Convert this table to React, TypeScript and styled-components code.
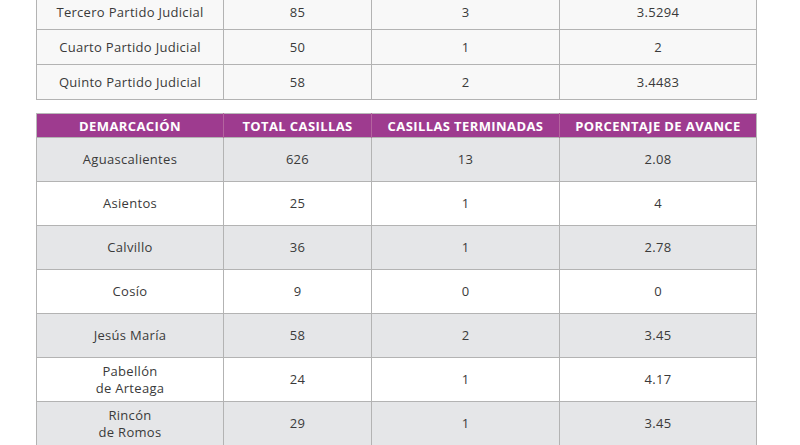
import styled, { createGlobalStyle } from "styled-components";

const GlobalStyle = createGlobalStyle`
  body {
    margin: 0;
    background: #ffffff;
    font-family: "Open Sans", "Liberation Sans", sans-serif;
    color: #3a3a3a;
    overflow: hidden;
  }
`

type Row = [string, string, string, string];

const partidos: Row[] = [
  ["Tercero Partido Judicial", "85", "3", "3.5294"],
  ["Cuarto Partido Judicial", "50", "1", "2"],
  ["Quinto Partido Judicial", "58", "2", "3.4483"],
];

const municipios: Row[] = [
  ["Aguascalientes", "626", "13", "2.08"],
  ["Asientos", "25", "1", "4"],
  ["Calvillo", "36", "1", "2.78"],
  ["Cosío", "9", "0", "0"],
  ["Jesús María", "58", "2", "3.45"],
  ["Pabellón\nde Arteaga", "24", "1", "4.17"],
  ["Rincón\nde Romos", "29", "1", "3.45"],
];

const headers = ["DEMARCACIÓN", "TOTAL CASILLAS", "CASILLAS TERMINADAS", "PORCENTAJE DE AVANCE"];
const widths = [187, 148, 188, 197];

const App = () => {
  return (
    <Page>
      <GlobalStyle />
      <Table $top>
        <colgroup>
          {widths.map((w, i) => <col key={i} style={{ width: w }} />)}
        </colgroup>
        <tbody>
          {partidos.map((row, i) => (
            <SmallRow key={i}>
              {row.map((cell, j) => <Cell key={j}>{cell}</Cell>)}
            </SmallRow>
          ))}
        </tbody>
      </Table>

      <Table>
        <colgroup>
          {widths.map((w, i) => <col key={i} style={{ width: w }} />)}
        </colgroup>
        <thead>
          <tr>
            {headers.map((h, i) => <Head key={i}>{h}</Head>)}
          </tr>
        </thead>
        <tbody>
          {municipios.map((row, i) => (
            <BigRow key={i} $shaded={i % 2 === 0}>
              {row.map((cell, j) => (
                <Cell key={j}>
                  {cell.split("\n").map((line, k) => <Line key={k}>{line}</Line>)}
                </Cell>
              ))}
            </BigRow>
          ))}
        </tbody>
      </Table>
    </Page>
  );
}

const Page = styled.div`
  display: flex;
  flex-direction: column;
  gap: 13px;
  padding-left: 36px;
  margin-top: -6px;
`

const Table = styled.table<{ $top?: boolean }>`
  width: 720px;
  table-layout: fixed;
  border-collapse: collapse;
  border: 1px solid #b9b9b9;
  background: ${p => p.$top ? "#f8f8f8" : "#ffffff"};
`

const SmallRow = styled.tr`
  height: 35px;
`

const BigRow = styled.tr<{ $shaded: boolean }>`
  height: 44px;
  background: ${p => p.$shaded ? "#e5e6e8" : "#ffffff"};
`

const Head = styled.th`
  height: 23px;
  padding: 0;
  background: #9e3b8f;
  color: #ffffff;
  font-size: 13px;
  letter-spacing: 0.4px;
  font-weight: 700;
  text-align: center;
  white-space: nowrap;
  border-right: 1px solid #b4649f;
  &:last-child {
    border-right: none;
  }
`

const Cell = styled.td`
  padding: 0;
  text-align: center;
  vertical-align: middle;
  font-size: 13px;
  letter-spacing: 0.3px;
  line-height: 17px;
  border: 1px solid #b3b3b3;
`

const Line = styled.div``

export default App
